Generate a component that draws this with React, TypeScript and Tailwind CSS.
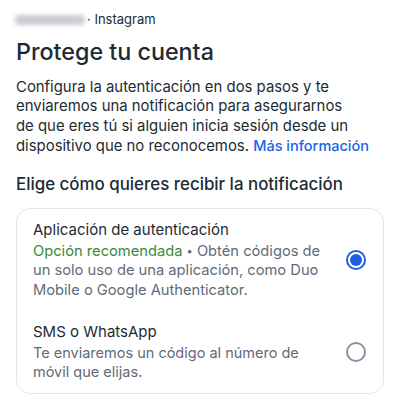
import React from "react";

function Radio({ checked }: { checked: boolean }) {
  return checked ? (
    <div className="w-[20px] h-[20px] rounded-full border-[2px] border-[#1d5fe3] flex items-center justify-center">
      <div className="w-[12px] h-[12px] rounded-full bg-[#1d5fe3]" />
    </div>
  ) : (
    <div className="w-[20px] h-[20px] rounded-full border-[2px] border-[#8694a2]" />
  );
}

export default function App() {
  return (
    <div
      className="w-[400px] h-[402px] bg-white text-[#1c2b33] overflow-hidden"
      style={{ fontFamily: "Inter, Roboto, 'Noto Sans', sans-serif" }}
    >
      <div className="pl-[15px] pr-[16px] pt-[13px]">
        <div className="flex items-center h-[14px] text-[13px] text-[#1c2b33]">
          <div className="w-[70px] h-[10px] bg-[#c9cdd2] blur-[2px] rounded-sm" />
          <span className="ml-[2px]">· Instagram</span>
        </div>
        <h1 className="mt-[11px] text-[23.3px] leading-[28px] font-medium pl-[1px]">
          Protege tu cuenta
        </h1>
        <p className="mt-[12px] text-[14.9px] leading-[19.3px] pl-[1px]">
          <span className="block whitespace-nowrap">Configura la autenticación en dos pasos y te</span>
          <span className="block whitespace-nowrap">enviaremos una notificación para asegurarnos</span>
          <span className="block whitespace-nowrap">de que eres tú si alguien inicia sesión desde un</span>
          <span className="block whitespace-nowrap">
            dispositivo que no reconocemos.{" "}
            <span className="text-[#1b64e4] font-medium text-[14.5px]">Más información</span>
          </span>
        </p>
        <h2 className="mt-[17px] text-[16.9px] leading-[22px] font-medium pl-[1px]">
          Elige cómo quieres recibir la notificación
        </h2>
        <div className="mt-[13px] ml-[1px] w-[368px] rounded-[14px] border border-[#e3e6ea] px-[16px] pt-[11px] pb-[11px]">
          <div className="flex items-center">
            <div className="flex-1 text-[15px] leading-[19.5px]">
              <div className="text-[#1c2b33]">Aplicación de autenticación</div>
              <div className="mt-[2px] text-[#5f6b7a] text-[14.7px]">
                <span className="block whitespace-nowrap">
                  <span className="text-[#388a3d]">Opción recomendada</span>{" "}
                  <span className="text-[11px] align-[1px]">•</span> Obtén códigos de
                </span>
                <span className="block whitespace-nowrap">un solo uso de una aplicación, como Duo</span>
                <span className="block whitespace-nowrap">Mobile o Google Authenticator.</span>
              </div>
            </div>
            <div className="pr-[1px]">
              <Radio checked />
            </div>
          </div>
          <div className="flex items-center mt-[22px]">
            <div className="flex-1 text-[15px] leading-[19.5px]">
              <div className="text-[#1c2b33]">SMS o WhatsApp</div>
              <div className="mt-[1px] text-[#5f6b7a] text-[14.5px]">
                <span className="block whitespace-nowrap">Te enviaremos un código al número de</span>
                <span className="block whitespace-nowrap">móvil que elijas.</span>
              </div>
            </div>
            <div className="pr-[1px]">
              <Radio checked={false} />
            </div>
          </div>
        </div>
      </div>
    </div>
  );
}
